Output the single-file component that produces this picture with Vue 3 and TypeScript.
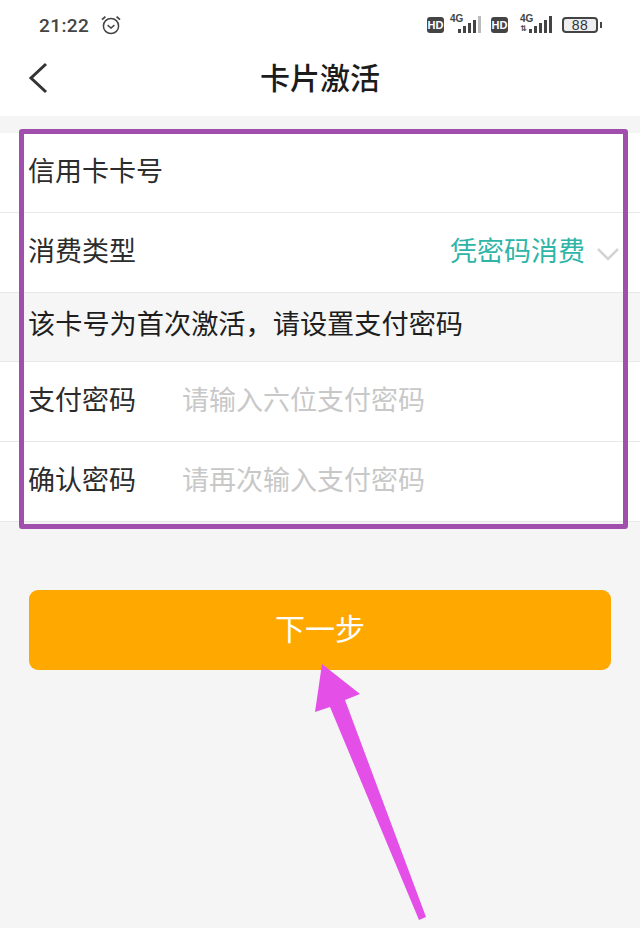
<script setup lang="ts">
const bars = [4, 7, 10, 13, 17];
</script>

<template>
  <div class="page">
    <header class="head">
      <div class="status">
        <div class="status-left">
          <span class="time">21:22</span>
          <svg class="alarm" width="22" height="22" viewBox="0 0 22 22" fill="none" stroke="#444" stroke-width="1.5">
            <circle cx="11" cy="12" r="7.6" />
            <path d="M7.6 11.2 11 14l3.4-2.8" />
            <path d="M2 5.6 5.4 2.6M20 5.6 16.6 2.6" stroke-width="1.8" />
          </svg>
        </div>
        <div class="status-right">
          <span class="hd">HD</span>
          <span class="signal first">
            <span class="g4">4G</span>
            <span class="bars">
              <i v-for="(b, n) in bars" :key="n" :class="{ dim: n === 4 }" :style="{ height: b + 'px' }"></i>
            </span>
          </span>
          <span class="hd second">HD</span>
          <span class="signal later">
            <span class="g4">4G</span>
            <span class="arrows">⇅</span>
            <span class="bars">
              <i v-for="(b, n) in bars" :key="n" :style="{ height: b + 'px' }"></i>
            </span>
          </span>
          <span class="battery"><span class="level">88</span></span>
          <span class="nub"></span>
        </div>
      </div>
      <div class="nav">
        <svg class="back" width="22" height="32" viewBox="0 0 22 32" fill="none" stroke="#333" stroke-width="3">
          <path d="M19 2 4 16l15 14" />
        </svg>
        <h1 class="title">卡片激活</h1>
      </div>
    </header>

    <section class="form">
      <div class="row"><span class="label">信用卡卡号</span></div>
      <div class="row">
        <span class="label">消费类型</span>
        <span class="value">凭密码消费</span>
        <svg class="chev" width="24" height="14" viewBox="0 0 24 14" fill="none" stroke="#d4d4d4" stroke-width="2.5">
          <path d="M2 2l10 10L22 2" />
        </svg>
      </div>
      <div class="notice">该卡号为首次激活，请设置支付密码</div>
      <div class="row">
        <span class="label fixed">支付密码</span>
        <span class="hint">请输入六位支付密码</span>
      </div>
      <div class="row">
        <span class="label fixed">确认密码</span>
        <span class="hint">请再次输入支付密码</span>
      </div>
    </section>

    <button class="next" type="button">下一步</button>

    <div class="frame"></div>
    <svg class="arrow" width="640" height="928" viewBox="0 0 640 928">
      <polygon points="322,664 360,694 345,700 426,917 419,920 330,707 315,712" fill="#e44fe8" />
    </svg>
  </div>
</template>

<style>
html, body { margin: 0; background: #f5f5f5; }
</style>

<style scoped>
.page {
  position: relative;
  width: 640px;
  height: 928px;
  overflow: hidden;
  background: #f5f5f5;
  font-family: "Noto Sans CJK SC", "Noto Sans", sans-serif;
  color: #2c2c2c;
}
.head { height: 116px; background: #fff; }
.status {
  height: 50px;
  display: flex;
  justify-content: space-between;
  align-items: center;
  padding: 0 38px 0 39px;
}
.status-left { display: flex; align-items: center; gap: 11px; }
.time {
  font-family: Roboto, sans-serif;
  font-size: 19px;
  font-weight: 500;
  color: #444;
  letter-spacing: 0.4px;
}
.status-right { display: flex; align-items: center; height: 24px; }
.hd {
  width: 17px;
  height: 16px;
  border-radius: 3px;
  background: #444;
  color: #fff;
  font: 700 11px/16px "Liberation Sans", sans-serif;
  text-align: center;
}
.hd.second { margin-left: 10px; }
.signal { position: relative; height: 20px; margin-top: -4px; }
.signal.first { width: 31px; margin-left: 6px; }
.signal.later { width: 32px; margin-left: 12px; }
.g4 {
  position: absolute;
  left: 0;
  top: 1px;
  font: 700 10px/10px "Liberation Sans", sans-serif;
  color: #444;
}
.arrows {
  position: absolute;
  left: 0;
  bottom: 0;
  font: 700 8px/9px "DejaVu Sans", sans-serif;
  color: #444;
}
.bars {
  position: absolute;
  right: 0;
  bottom: 0;
  display: flex;
  align-items: flex-end;
  gap: 2px;
}
.bars i { display: block; width: 3px; background: #444; }
.bars i.dim { background: #bbb; }
.battery {
  margin-left: 10px;
  width: 36px;
  height: 16px;
  box-sizing: border-box;
  border: 2px solid #444;
  border-radius: 4px;
  display: flex;
  align-items: center;
  justify-content: center;
  background: #eee;
}
.level { font: 400 14px/15px "Liberation Sans", sans-serif; color: #333; letter-spacing: 0.5px; }
.nub { width: 2px; height: 6px; margin-left: 2px; background: #444; }
.nav { position: relative; height: 66px; display: flex; align-items: center; justify-content: center; }
.nav .back { position: absolute; left: 27px; top: 12px; }
.title {
  margin: -15px 0 0;
  font-size: 30px;
  line-height: 40px;
  font-weight: 500;
  color: #1c1c1c;
}
.form { margin-top: 17px; background: #fff; }
.row {
  height: 80px;
  box-sizing: border-box;
  display: flex;
  align-items: center;
  padding: 0 20px 6px 28px;
  border-bottom: 1px solid #e8e8e8;
  font-size: 27px;
}
.label { line-height: 36px; color: #2c2c2c; }
.label.fixed { width: 154px; }
.value { margin-left: auto; color: #2eb5a8; }
.chev { margin-left: 11px; margin-top: 8px; flex: none; }
.hint { color: #c8c8c8; }
.notice {
  height: 69px;
  box-sizing: border-box;
  padding: 10px 28px 0;
  background: #f6f6f6;
  border-bottom: 1px solid #e8e8e8;
  font-size: 27.2px;
  line-height: 38px;
  color: #1e1e1e;
}
.next {
  display: block;
  width: 582px;
  height: 80px;
  margin: 68px 0 0 29px;
  padding: 0 0 6px;
  border: none;
  border-radius: 9px;
  background: #ffa800;
  color: #fff;
  font-family: inherit;
  font-size: 30px;
}
.frame {
  position: absolute;
  left: 19px;
  top: 129px;
  width: 609px;
  height: 400px;
  box-sizing: border-box;
  border: 5px solid #a050ac;
  border-radius: 3px;
}
.arrow { position: absolute; left: 0; top: 0; }
</style>
